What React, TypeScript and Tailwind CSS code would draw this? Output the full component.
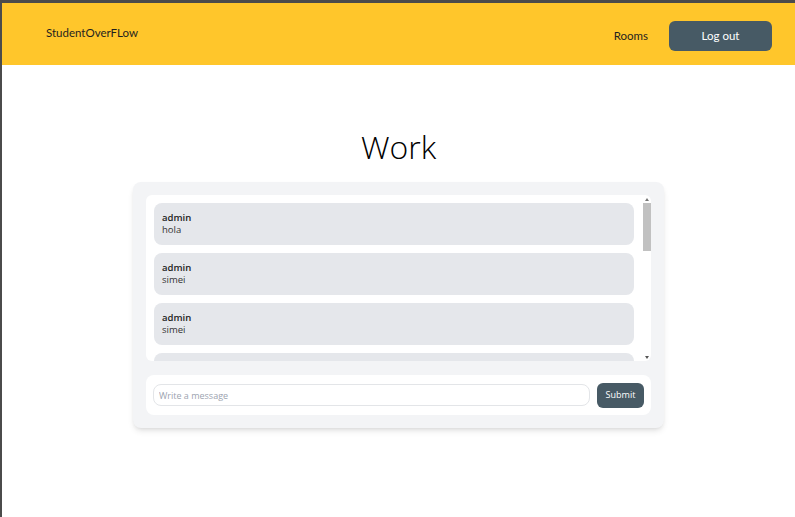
import { useState } from "react";

const messages = [
  { user: "admin", text: "hola" },
  { user: "admin", text: "simei" },
  { user: "admin", text: "simei" },
];

function Navbar() {
  return (
    <nav className="h-[62px] bg-[#ffc62b] flex items-center justify-between pl-[44px] pr-[23px] pt-[4px] font-['Lato',sans-serif]">
      <span className="text-[11.5px] text-[#1f1f1f] -mt-[6px]">StudentOverFLow</span>
      <div className="flex items-center gap-[21px]">
        <a className="text-[11.5px] text-[#1f1f1f]">Rooms</a>
        <button className="w-[103px] h-[30px] bg-[#475a65] rounded-md text-white text-[11.5px]">
          Log out
        </button>
      </div>
    </nav>
  );
}

function Scrollbar() {
  return (
    <div className="w-[9px] shrink-0 flex flex-col items-center">
      <div className="h-[8px] flex items-center justify-center">
        <div className="w-0 h-0 border-l-[2px] border-r-[2px] border-b-[3px] border-l-transparent border-r-transparent border-b-[#777]" />
      </div>
      <div className="w-[8px] h-[48px] bg-[#c1c1c1]" />
      <div className="flex-1" />
      <div className="h-[8px] flex items-center justify-center">
        <div className="w-0 h-0 border-l-[2px] border-r-[2px] border-t-[3px] border-l-transparent border-r-transparent border-t-[#555]" />
      </div>
    </div>
  );
}

function App() {
  const [msg, setMsg] = useState("");

  return (
    <div className="min-h-[517px] bg-white border-t-[3px] border-l-2 border-[#4b4b4b] font-['Open_Sans',sans-serif]">
      <Navbar />
      <main className="flex flex-col items-center">
        <h1 className="mt-[62px] text-[32px] leading-[40px] font-light text-black">Work</h1>
        <div className="mt-[15px] w-[531px] bg-[#f3f4f6] rounded-lg shadow-md p-[13px] flex flex-col gap-[14px]">
          <div className="h-[166px] bg-white rounded-md flex overflow-hidden">
            <div className="flex-1 overflow-hidden px-[8px] py-[8px] flex flex-col gap-[8px]">
              {messages.map((m, i) => (
                <div key={i} className="shrink-0 h-[42px] bg-[#e5e7eb] rounded-lg px-[8px] flex flex-col justify-center">
                  <span className="text-[9.5px] leading-[12px] font-semibold text-[#222]">{m.user}</span>
                  <span className="text-[9.5px] leading-[12px] text-[#333]">{m.text}</span>
                </div>
              ))}
              <div className="shrink-0 h-[42px] bg-[#e5e7eb] rounded-lg" />
            </div>
            <Scrollbar />
          </div>
          <div className="bg-white rounded-lg h-[40px] px-[7px] flex items-center gap-[7px]">
            <input
              value={msg}
              onChange={(e) => setMsg(e.target.value)}
              placeholder="Write a message"
              className="flex-1 h-[22px] border border-[#e3e5e8] rounded-lg px-[5px] text-[9px] placeholder:text-[#9ca3af] outline-none"
            />
            <button className="w-[47px] h-[25px] bg-[#475a65] rounded-md text-white text-[9px]">Submit</button>
          </div>
        </div>
      </main>
    </div>
  );
}

export default App;
